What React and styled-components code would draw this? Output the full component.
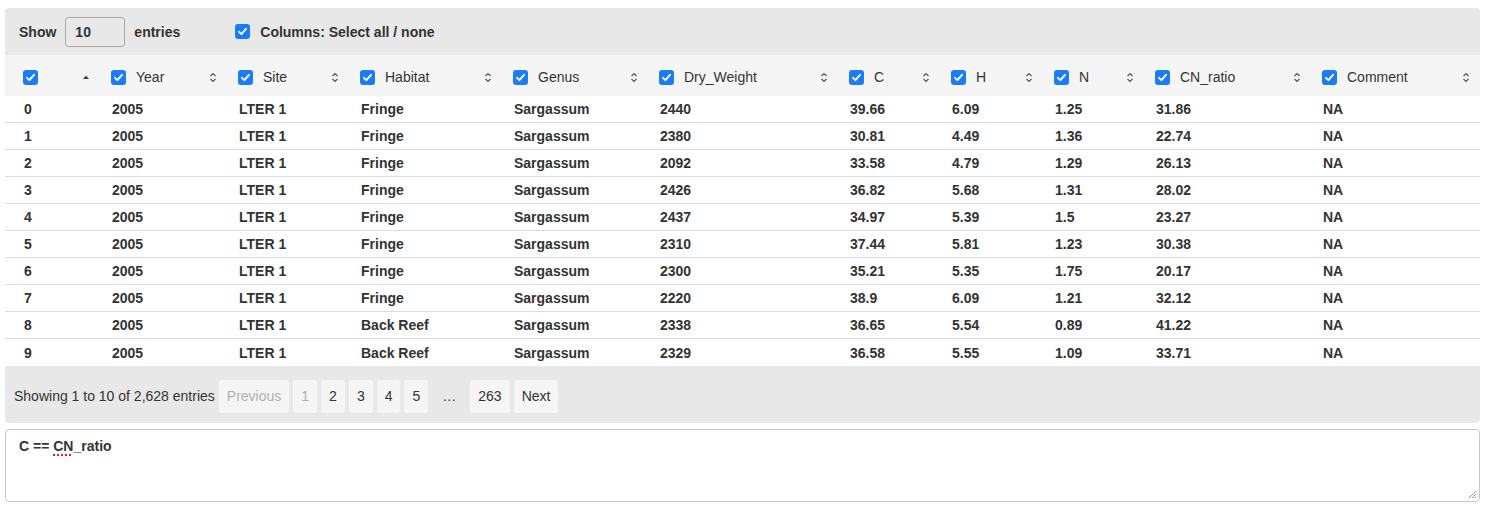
import React from 'react';
import styled, { createGlobalStyle } from 'styled-components';

const GlobalStyle = createGlobalStyle`
  body {
    margin: 0;
    background: #ffffff;
    font-family: 'Liberation Sans', Arial, sans-serif;
    color: #333;
  }
`;

const Page = styled.div`
  padding: 8px 8px 0 5px;
`;

const Panel = styled.div`
  background: #e8e8e8;
  border-radius: 4px;
  overflow: hidden;
`;

const TopBar = styled.div`
  height: 47px;
  display: flex;
  align-items: center;
  padding-left: 14px;
  font-size: 14px;
  font-weight: bold;
`;

const LengthInput = styled.div`
  width: 60px;
  height: 30px;
  box-sizing: border-box;
  border: 1px solid #aaa;
  border-radius: 3px;
  margin: 0 9px;
  display: flex;
  align-items: center;
  padding-left: 9px;
  font-weight: bold;
`;

const ColumnsToggle = styled.label`
  display: flex;
  align-items: center;
  gap: 10px;
  margin-left: 55px;
`;

const cols = '88px 127px 122px 153px 146px 190px 102px 103px 101px 167px 1fr';

const HeadRow = styled.div`
  display: grid;
  grid-template-columns: ${cols};
  padding: 3px 0 0 7px;
  height: 41px;
  box-sizing: border-box;
  background: #f5f5f5;
  align-items: center;
`;

const HeadCell = styled.div`
  display: flex;
  align-items: center;
  gap: 10px;
  padding: 0 10px 0 11px;
  font-size: 14px;
  color: #333;
`;

const SortIcon = styled.svg`
  margin-left: auto;
  flex: none;
`;

const Body = styled.div`
  background: #fff;
`;

const Row = styled.div`
  display: grid;
  grid-template-columns: ${cols};
  padding-left: 7px;
  height: 27px;
  align-items: center;
  border-bottom: 1px solid #ddd;
  box-sizing: border-box;
  &:last-child {
    border-bottom: none;
  }
`;

const Cell = styled.div`
  padding-left: 12px;
  font-size: 14px;
  font-weight: bold;
  color: #333;
  white-space: nowrap;
`;

const Footer = styled.div`
  height: 57px;
  display: flex;
  align-items: center;
  padding: 3px 0 0 9px;
  box-sizing: border-box;
  font-size: 14px;
`;

const Info = styled.div`
  margin-right: 4px;
  color: #333;
`;

const Pager = styled.div`
  display: flex;
  align-items: center;
  gap: 4px;
`;

const PageButton = styled.span`
  height: 33px;
  display: flex;
  align-items: center;
  justify-content: center;
  padding: 0 8px;
  border-radius: 3px;
  background: ${p => (p.$plain ? 'transparent' : '#f5f5f5')};
  color: ${p => (p.$disabled ? '#b0b0b0' : '#333')};
  margin: ${p => (p.$plain ? '0 2px' : '0')};
  font-size: 14px;
`;

const Editor = styled.div`
  position: relative;
  margin-top: 6px;
  height: 73px;
  box-sizing: border-box;
  border: 1px solid #c8c8c8;
  border-radius: 4px;
  padding: 8px 13px;
  font-size: 14px;
  font-weight: bold;
  color: #333;
`;

const Misspelled = styled.span`
  text-decoration: underline dotted #e02020;
  text-decoration-thickness: 2px;
  text-underline-offset: 3px;
`;

const Grip = styled.svg`
  position: absolute;
  right: 2px;
  bottom: 2px;
`;

const Box = styled.span`
  width: 15px;
  height: 15px;
  flex: none;
  border-radius: 3px;
  background: #1a7cf6;
  display: inline-flex;
  align-items: center;
  justify-content: center;
`;

const Check = () => (
  <Box>
    <svg width="11" height="11" viewBox="0 0 11 11">
      <path d="M2 5.8 L4.4 8.2 L9 2.8" fill="none" stroke="#fff" strokeWidth="1.9" strokeLinecap="round" strokeLinejoin="round" />
    </svg>
  </Box>
);

const Sort = ({ asc }) =>
  asc ? (
    <SortIcon width="8" height="8" viewBox="0 0 8 8">
      <path d="M1 6 L4 2.5 L7 6 Z" fill="#444" />
    </SortIcon>
  ) : (
    <SortIcon width="8" height="11" viewBox="0 0 8 11">
      <path d="M1.5 4 L4 1.5 L6.5 4 M1.5 7 L4 9.5 L6.5 7" fill="none" stroke="#555" strokeWidth="1.2" />
    </SortIcon>
  );

const headers = ['Year', 'Site', 'Habitat', 'Genus', 'Dry_Weight', 'C', 'H', 'N', 'CN_ratio', 'Comment'];

const rows = [
  ['Fringe', 2440, '39.66', '6.09', '1.25', '31.86'],
  ['Fringe', 2380, '30.81', '4.49', '1.36', '22.74'],
  ['Fringe', 2092, '33.58', '4.79', '1.29', '26.13'],
  ['Fringe', 2426, '36.82', '5.68', '1.31', '28.02'],
  ['Fringe', 2437, '34.97', '5.39', '1.5', '23.27'],
  ['Fringe', 2310, '37.44', '5.81', '1.23', '30.38'],
  ['Fringe', 2300, '35.21', '5.35', '1.75', '20.17'],
  ['Fringe', 2220, '38.9', '6.09', '1.21', '32.12'],
  ['Back Reef', 2338, '36.65', '5.54', '0.89', '41.22'],
  ['Back Reef', 2329, '36.58', '5.55', '1.09', '33.71'],
];

export default function App() {
  return (
    <>
      <GlobalStyle />
      <Page>
        <Panel>
          <TopBar>
            Show
            <LengthInput>10</LengthInput>
            entries
            <ColumnsToggle>
              <Check />
              Columns: Select all / none
            </ColumnsToggle>
          </TopBar>

          <HeadRow>
            <HeadCell>
              <Check />
              <Sort asc />
            </HeadCell>
            {headers.map(h => (
              <HeadCell key={h}>
                <Check />
                {h}
                <Sort />
              </HeadCell>
            ))}
          </HeadRow>

          <Body>
            {rows.map((r, i) => (
              <Row key={i}>
                <Cell>{i}</Cell>
                <Cell>2005</Cell>
                <Cell>LTER 1</Cell>
                <Cell>{r[0]}</Cell>
                <Cell>Sargassum</Cell>
                <Cell>{r[1]}</Cell>
                <Cell>{r[2]}</Cell>
                <Cell>{r[3]}</Cell>
                <Cell>{r[4]}</Cell>
                <Cell>{r[5]}</Cell>
                <Cell>NA</Cell>
              </Row>
            ))}
          </Body>

          <Footer>
            <Info>Showing 1 to 10 of 2,628 entries</Info>
            <Pager>
              <PageButton $disabled>Previous</PageButton>
              <PageButton $disabled>1</PageButton>
              <PageButton>2</PageButton>
              <PageButton>3</PageButton>
              <PageButton>4</PageButton>
              <PageButton>5</PageButton>
              <PageButton $plain>…</PageButton>
              <PageButton>263</PageButton>
              <PageButton>Next</PageButton>
            </Pager>
          </Footer>
        </Panel>

        <Editor>
          C == <Misspelled>CN</Misspelled>_ratio
          <Grip width="10" height="10" viewBox="0 0 10 10">
            <path d="M9 2 L2 9 M9 5 L5 9 M9 8 L8 9" stroke="#999" strokeWidth="1" />
          </Grip>
        </Editor>
      </Page>
    </>
  );
}
